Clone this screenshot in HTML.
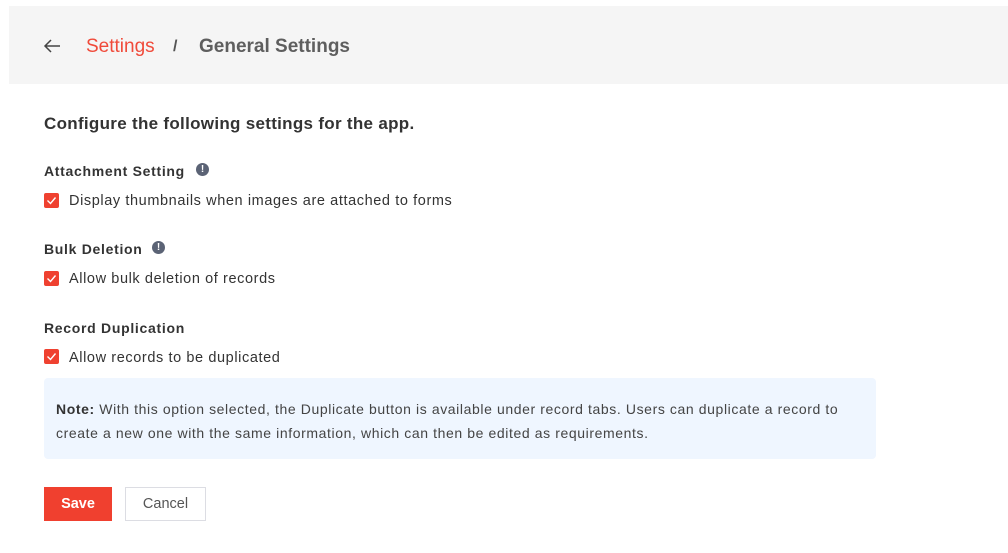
<!DOCTYPE html>
<html><head><style>
body{margin:0;width:1008px;height:553px;background:#fff;font-family:"Liberation Sans",sans-serif;position:relative;overflow:hidden;color:#333}
.a{position:absolute;white-space:nowrap}
.hdr{position:absolute;left:9px;top:6px;right:0;height:78px;background:#f5f5f5}
.cb{position:absolute;width:15px;height:15px;background:#ef4130;border-radius:2px}
.cb svg{position:absolute;left:2px;top:2px}
.lbl{font-size:14px;font-weight:bold;color:#333;letter-spacing:0.7px}
.txt{font-size:14.5px;color:#333;letter-spacing:0.6px}
.info{position:absolute;width:13px;height:13px;border-radius:50%;background:#5b6375;color:#fff;font-size:10px;font-weight:bold;text-align:center;line-height:13px}
</style></head><body>
<div class="hdr"></div>
<svg class="a" style="left:43px;top:38px" width="18" height="16" viewBox="0 0 18 16"><path d="M17 8H2M8 2L2 8l6 6" fill="none" stroke="#444" stroke-width="1.5"/></svg>
<div class="a" style="left:86px;top:36px;font-size:19px;color:#f04a3a">Settings</div>
<div class="a" style="left:173px;top:38px;font-size:16px;color:#555;font-weight:bold">/</div>
<div class="a" style="left:199px;top:36px;font-size:19px;color:#5e5e5e;font-weight:bold">General Settings</div>
<div class="a" style="left:44px;top:114px;font-size:17px;font-weight:bold;color:#333;letter-spacing:0.3px">Configure the following settings for the app.</div>
<div class="a lbl" style="left:44px;top:163px">Attachment Setting</div>
<div class="info" style="left:196px;top:163px">!</div>
<div class="cb" style="left:44px;top:193px"><svg width="11" height="11"><path d="M1.5 5.5l3 3 5-6" fill="none" stroke="#fff" stroke-width="1.4"/></svg></div>
<div class="a txt" style="left:69px;top:193px">Display thumbnails when images are attached to forms</div>
<div class="a lbl" style="left:44px;top:241px">Bulk Deletion</div>
<div class="info" style="left:152px;top:241px">!</div>
<div class="cb" style="left:44px;top:271px"><svg width="11" height="11"><path d="M1.5 5.5l3 3 5-6" fill="none" stroke="#fff" stroke-width="1.4"/></svg></div>
<div class="a txt" style="left:69px;top:271px">Allow bulk deletion of records</div>
<div class="a lbl" style="left:44px;top:320px">Record Duplication</div>
<div class="cb" style="left:44px;top:349px"><svg width="11" height="11"><path d="M1.5 5.5l3 3 5-6" fill="none" stroke="#fff" stroke-width="1.4"/></svg></div>
<div class="a txt" style="left:69px;top:350px">Allow records to be duplicated</div>
<div class="a" style="left:44px;top:378px;width:832px;height:81px;background:#eff6ff;border-radius:4px"></div>
<div class="a" style="left:56px;top:397px;font-size:14px;line-height:24px;color:#444;letter-spacing:0.6px">
<b style="color:#333">Note:</b> With this option selected, the Duplicate button is available under record tabs. Users can duplicate a record to<br>create a new one with the same information, which can then be edited as requirements.</div>
<div class="a" style="left:44px;top:487px;width:68px;height:34px;background:#f0402f;color:#fff;font-weight:bold;font-size:14.5px;text-align:center;line-height:35px">Save</div>
<div class="a" style="left:125px;top:487px;width:79px;height:32px;border:1px solid #dcdde3;color:#555;font-size:14.5px;text-align:center;line-height:33px">Cancel</div>
</body></html>
